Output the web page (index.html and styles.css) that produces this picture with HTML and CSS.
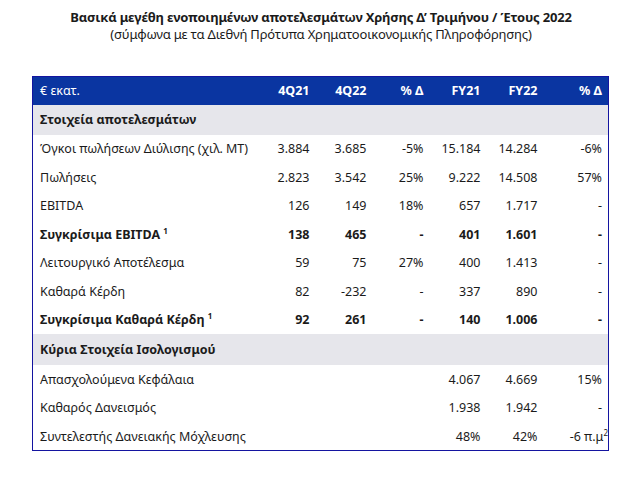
FILE: index.html
```html
<!DOCTYPE html>
<html lang="el">
<head>
    <meta charset="UTF-8">
    <title>Βασικά μεγέθη 2022</title>
    <link rel="stylesheet" href="styles.css">
</head>
<body>
    <div class="heading">
        <h1>Βασικά μεγέθη ενοποιημένων αποτελεσμάτων Χρήσης Δ’ Τριμήνου / Έτους 2022</h1>
        <p class="subtitle">(σύμφωνα με τα Διεθνή Πρότυπα Χρηματοοικονομικής Πληροφόρησης)</p>
    </div>

    <table class="results">
        <colgroup>
            <col>
            <col class="num">
            <col class="num">
            <col class="num">
            <col class="num">
            <col class="num">
            <col class="last">
        </colgroup>
        <thead>
            <tr>
                <th class="label">€ εκατ.</th>
                <th>4Q21</th>
                <th>4Q22</th>
                <th>% Δ</th>
                <th>FY21</th>
                <th>FY22</th>
                <th>% Δ</th>
            </tr>
        </thead>
        <tbody>
            <tr class="section">
                <td colspan="7">Στοιχεία αποτελεσμάτων</td>
            </tr>
            <tr>
                <td>Όγκοι πωλήσεων Διύλισης (χιλ. ΜΤ)</td>
                <td>3.884</td><td>3.685</td><td>-5%</td><td>15.184</td><td>14.284</td><td>-6%</td>
            </tr>
            <tr>
                <td>Πωλήσεις</td>
                <td>2.823</td><td>3.542</td><td>25%</td><td>9.222</td><td>14.508</td><td>57%</td>
            </tr>
            <tr>
                <td>EBITDA</td>
                <td>126</td><td>149</td><td>18%</td><td>657</td><td>1.717</td><td>-</td>
            </tr>
            <tr class="strong">
                <td>Συγκρίσιμα EBITDA <sup>1</sup></td>
                <td>138</td><td>465</td><td>-</td><td>401</td><td>1.601</td><td>-</td>
            </tr>
            <tr>
                <td>Λειτουργικό Αποτέλεσμα</td>
                <td>59</td><td>75</td><td>27%</td><td>400</td><td>1.413</td><td>-</td>
            </tr>
            <tr>
                <td>Καθαρά Κέρδη</td>
                <td>82</td><td>-232</td><td>-</td><td>337</td><td>890</td><td>-</td>
            </tr>
            <tr class="strong">
                <td>Συγκρίσιμα Καθαρά Κέρδη <sup>1</sup></td>
                <td>92</td><td>261</td><td>-</td><td>140</td><td>1.006</td><td>-</td>
            </tr>
            <tr class="section tall">
                <td colspan="7">Κύρια Στοιχεία Ισολογισμού</td>
            </tr>
            <tr>
                <td>Απασχολούμενα Κεφάλαια</td>
                <td></td><td></td><td></td><td>4.067</td><td>4.669</td><td>15%</td>
            </tr>
            <tr>
                <td>Καθαρός Δανεισμός</td>
                <td></td><td></td><td></td><td>1.938</td><td>1.942</td><td>-</td>
            </tr>
            <tr>
                <td>Συντελεστής Δανειακής Μόχλευσης</td>
                <td></td><td></td><td></td><td>48%</td><td>42%</td><td class="bp">-6 π.μ<sup>2</sup></td>
            </tr>
        </tbody>
    </table>
</body>
</html>
```

FILE: styles.css
```css
:root {
    --blue: #0a35a1;
    --frame: #1414a0;
    --grey: #e6e6eb;
    --text: #1b1b1b;
}

* {
    margin: 0;
    padding: 0;
    box-sizing: border-box;
}

body {
    font-family: 'Noto Sans', 'DejaVu Sans', sans-serif;
    color: var(--text);
    background: #ffffff;
    width: 636px;
}

.heading {
    text-align: center;
    padding-top: 8px;
    padding-left: 6px;
    height: 76px;
}

h1 {
    font-size: 13px;
    font-weight: 700;
    line-height: 18px;
    letter-spacing: -0.2px;
}

.subtitle {
    font-size: 13px;
    line-height: 17px;
    letter-spacing: -0.2px;
}

.results {
    margin-left: 32px;
    width: 577px;
    table-layout: fixed;
    border-collapse: collapse;
    border: 1.5px solid var(--frame);
    font-size: 12.5px;
}

.results col.num {
    width: 57px;
}

.results col.last {
    width: 68px;
}

.results th,
.results td {
    text-align: right;
    padding: 0 3px 0 0;
    white-space: nowrap;
    height: 28.5px;
}

.results th:last-child,
.results td:last-child {
    padding-right: 6px;
}

.results th:first-child,
.results td:first-child {
    text-align: left;
    padding-left: 7px;
}

.results thead tr {
    background: var(--blue);
    color: #ffffff;
}

.results th {
    height: 28px;
    font-weight: 700;
}

.results th.label {
    font-weight: 400;
}

.section td {
    background: var(--grey);
    font-weight: 700;
    height: 30px;
}

.section.tall td {
    height: 31px;
}

.strong td {
    font-weight: 700;
}

sup {
    font-size: 8px;
    vertical-align: 5px;
    line-height: 0;
}

.bp {
    padding-right: 0 !important;
    overflow: visible;
}
```
